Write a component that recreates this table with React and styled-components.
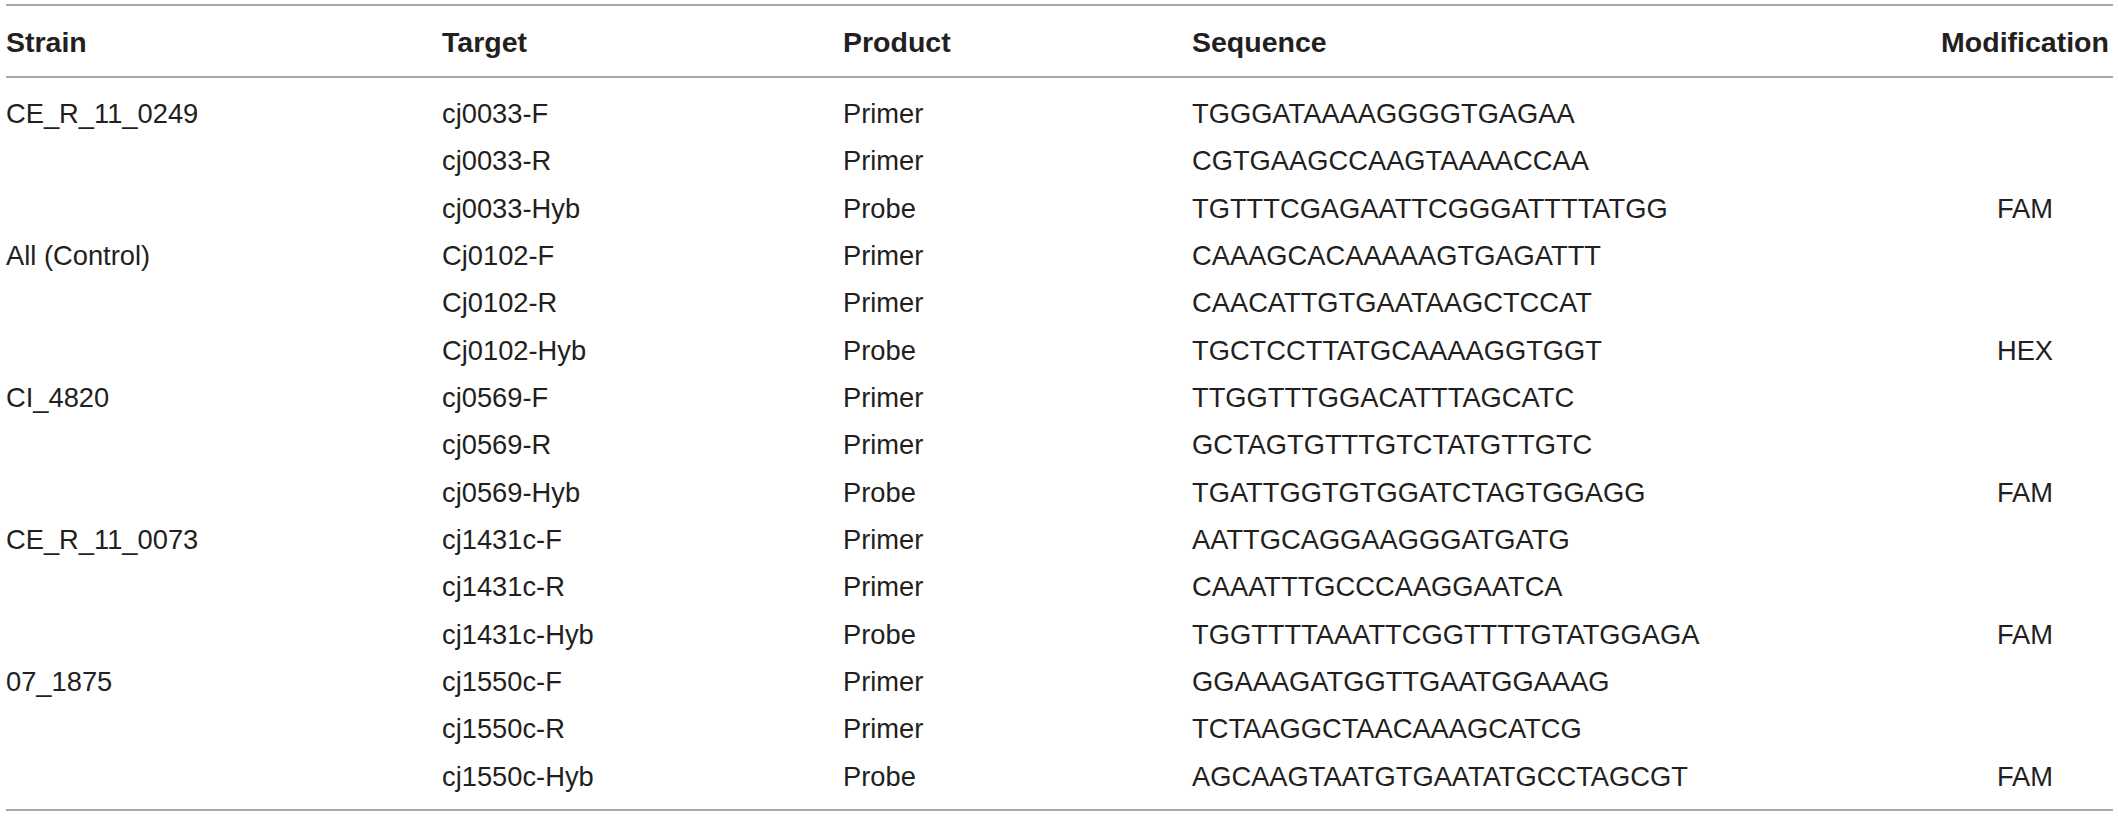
import React from "react";
import styled, { createGlobalStyle } from "styled-components";

const GlobalStyle = createGlobalStyle`
  html, body {
    margin: 0;
    padding: 0;
    background: #ffffff;
  }
  body {
    font-family: "Liberation Sans", Arial, Helvetica, sans-serif;
    color: #231f20;
  }
`;

const Page = styled.div`
  padding: 4px 5px 0 6px;
  width: 2107px;
`;

const Table = styled.div`
  display: flex;
  flex-direction: column;
  border-top: 2px solid #a7a7a7;
  border-bottom: 2px solid #a7a7a7;
`;

const columns = "436px 401px 349px 1fr 176px";

const Head = styled.div`
  display: grid;
  grid-template-columns: ${columns};
  padding: 12.5px 0 10.5px;
  border-bottom: 2px solid #a7a7a7;
`;

const HeadCell = styled.div`
  font-size: 28.5px;
  font-weight: 700;
  line-height: 47px;
  white-space: nowrap;
  text-align: ${(p) => (p.$center ? "center" : "left")};
  color: #231f20;
`;

const Body = styled.div`
  display: flex;
  flex-direction: column;
  padding: 12px 0 9px;
`;

const Row = styled.div`
  display: grid;
  grid-template-columns: ${columns};
  height: 47.33px;
`;

const Cell = styled.div`
  font-size: 27.3px;
  line-height: 47.33px;
  white-space: nowrap;
  text-align: ${(p) => (p.$center ? "center" : "left")};
  color: #231f20;
`;

const rows = [
  ["CE_R_11_0249", "cj0033-F", "Primer", "TGGGATAAAAGGGGTGAGAA", ""],
  ["", "cj0033-R", "Primer", "CGTGAAGCCAAGTAAAACCAA", ""],
  ["", "cj0033-Hyb", "Probe", "TGTTTCGAGAATTCGGGATTTTATGG", "FAM"],
  ["All (Control)", "Cj0102-F", "Primer", "CAAAGCACAAAAAGTGAGATTT", ""],
  ["", "Cj0102-R", "Primer", "CAACATTGTGAATAAGCTCCAT", ""],
  ["", "Cj0102-Hyb", "Probe", "TGCTCCTTATGCAAAAGGTGGT", "HEX"],
  ["CI_4820", "cj0569-F", "Primer", "TTGGTTTGGACATTTAGCATC", ""],
  ["", "cj0569-R", "Primer", "GCTAGTGTTTGTCTATGTTGTC", ""],
  ["", "cj0569-Hyb", "Probe", "TGATTGGTGTGGATCTAGTGGAGG", "FAM"],
  ["CE_R_11_0073", "cj1431c-F", "Primer", "AATTGCAGGAAGGGATGATG", ""],
  ["", "cj1431c-R", "Primer", "CAAATTTGCCCAAGGAATCA", ""],
  ["", "cj1431c-Hyb", "Probe", "TGGTTTTAAATTCGGTTTTGTATGGAGA", "FAM"],
  ["07_1875", "cj1550c-F", "Primer", "GGAAAGATGGTTGAATGGAAAG", ""],
  ["", "cj1550c-R", "Primer", "TCTAAGGCTAACAAAGCATCG", ""],
  ["", "cj1550c-Hyb", "Probe", "AGCAAGTAATGTGAATATGCCTAGCGT", "FAM"],
];

export default function App() {
  return (
    <>
      <GlobalStyle />
      <Page>
        <Table>
          <Head>
            <HeadCell>Strain</HeadCell>
            <HeadCell>Target</HeadCell>
            <HeadCell>Product</HeadCell>
            <HeadCell>Sequence</HeadCell>
            <HeadCell $center>Modification</HeadCell>
          </Head>
          <Body>
            {rows.map((r, i) => (
              <Row key={i}>
                <Cell>{r[0]}</Cell>
                <Cell>{r[1]}</Cell>
                <Cell>{r[2]}</Cell>
                <Cell>{r[3]}</Cell>
                <Cell $center>{r[4]}</Cell>
              </Row>
            ))}
          </Body>
        </Table>
      </Page>
    </>
  );
}
